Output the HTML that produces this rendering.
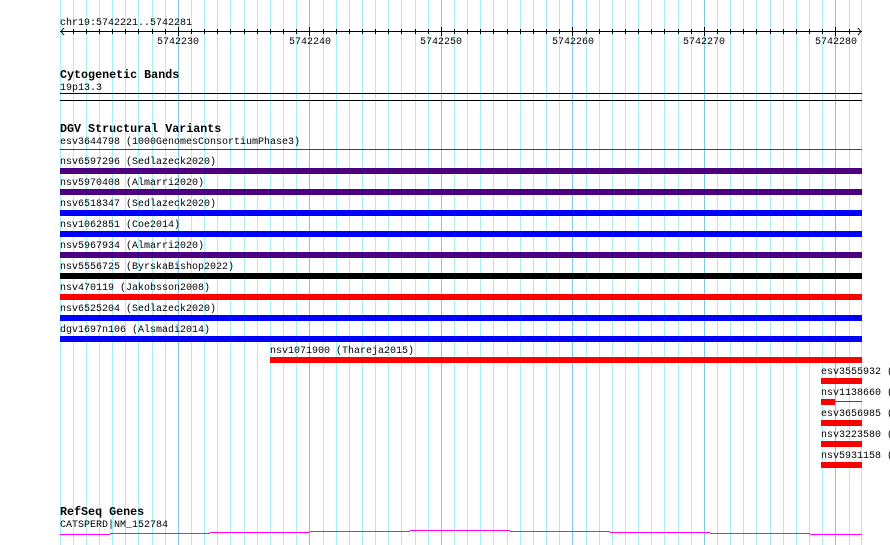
<!DOCTYPE html>
<html><head><meta charset="utf-8"><style>
html,body{margin:0;padding:0;background:#fff;width:890px;height:545px;overflow:hidden}
svg{display:block}
text{font-family:"Liberation Mono",monospace;font-size:10px;fill:#000}
.b{font-weight:bold;font-size:11.7px}
</style></head><body>
<svg width="890" height="545" viewBox="0 0 890 545" shape-rendering="crispEdges">
<g stroke="#aaeef5" stroke-width="1">
<line x1="60.5" y1="0" x2="60.5" y2="545"/><line x1="73.5" y1="0" x2="73.5" y2="545"/><line x1="86.5" y1="0" x2="86.5" y2="545"/><line x1="99.5" y1="0" x2="99.5" y2="545"/><line x1="112.5" y1="0" x2="112.5" y2="545"/><line x1="125.5" y1="0" x2="125.5" y2="545"/><line x1="138.5" y1="0" x2="138.5" y2="545"/><line x1="152.5" y1="0" x2="152.5" y2="545"/><line x1="165.5" y1="0" x2="165.5" y2="545"/>
<line x1="191.5" y1="0" x2="191.5" y2="545"/><line x1="204.5" y1="0" x2="204.5" y2="545"/><line x1="217.5" y1="0" x2="217.5" y2="545"/><line x1="230.5" y1="0" x2="230.5" y2="545"/><line x1="244.5" y1="0" x2="244.5" y2="545"/><line x1="257.5" y1="0" x2="257.5" y2="545"/><line x1="270.5" y1="0" x2="270.5" y2="545"/><line x1="283.5" y1="0" x2="283.5" y2="545"/><line x1="296.5" y1="0" x2="296.5" y2="545"/>
<line x1="323.5" y1="0" x2="323.5" y2="545"/><line x1="336.5" y1="0" x2="336.5" y2="545"/><line x1="349.5" y1="0" x2="349.5" y2="545"/><line x1="362.5" y1="0" x2="362.5" y2="545"/><line x1="375.5" y1="0" x2="375.5" y2="545"/><line x1="388.5" y1="0" x2="388.5" y2="545"/><line x1="401.5" y1="0" x2="401.5" y2="545"/><line x1="415.5" y1="0" x2="415.5" y2="545"/><line x1="428.5" y1="0" x2="428.5" y2="545"/>
<line x1="454.5" y1="0" x2="454.5" y2="545"/><line x1="467.5" y1="0" x2="467.5" y2="545"/><line x1="480.5" y1="0" x2="480.5" y2="545"/><line x1="493.5" y1="0" x2="493.5" y2="545"/><line x1="507.5" y1="0" x2="507.5" y2="545"/><line x1="520.5" y1="0" x2="520.5" y2="545"/><line x1="533.5" y1="0" x2="533.5" y2="545"/><line x1="546.5" y1="0" x2="546.5" y2="545"/><line x1="559.5" y1="0" x2="559.5" y2="545"/>
<line x1="586.5" y1="0" x2="586.5" y2="545"/><line x1="599.5" y1="0" x2="599.5" y2="545"/><line x1="612.5" y1="0" x2="612.5" y2="545"/><line x1="625.5" y1="0" x2="625.5" y2="545"/><line x1="638.5" y1="0" x2="638.5" y2="545"/><line x1="651.5" y1="0" x2="651.5" y2="545"/><line x1="664.5" y1="0" x2="664.5" y2="545"/><line x1="678.5" y1="0" x2="678.5" y2="545"/><line x1="691.5" y1="0" x2="691.5" y2="545"/>
<line x1="717.5" y1="0" x2="717.5" y2="545"/><line x1="730.5" y1="0" x2="730.5" y2="545"/><line x1="743.5" y1="0" x2="743.5" y2="545"/><line x1="756.5" y1="0" x2="756.5" y2="545"/><line x1="770.5" y1="0" x2="770.5" y2="545"/><line x1="783.5" y1="0" x2="783.5" y2="545"/><line x1="796.5" y1="0" x2="796.5" y2="545"/><line x1="809.5" y1="0" x2="809.5" y2="545"/><line x1="822.5" y1="0" x2="822.5" y2="545"/>
<line x1="849.5" y1="0" x2="849.5" y2="545"/><line x1="861.5" y1="0" x2="861.5" y2="545"/>
</g>
<g stroke="#80c8e8" stroke-width="1">
<line x1="178.5" y1="0" x2="178.5" y2="545"/><line x1="309.5" y1="0" x2="309.5" y2="545"/><line x1="441.5" y1="0" x2="441.5" y2="545"/><line x1="572.5" y1="0" x2="572.5" y2="545"/><line x1="704.5" y1="0" x2="704.5" y2="545"/><line x1="835.5" y1="0" x2="835.5" y2="545"/>
</g>
<text x="60" y="25">chr19:5742221..5742281</text>
<g stroke="#000" stroke-width="1">
<line x1="60" y1="31.5" x2="862" y2="31.5"/>
<polyline points="64,28 61,31.5 64,35" fill="none"/>
<polyline points="858,28 861,31.5 858,35" fill="none"/>
<path d="M73.5 29v5M86.5 29v5M99.5 29v5M112.5 29v5M125.5 29v5M138.5 29v5M152.5 29v5M165.5 29v5M178.5 27v9M191.5 29v5M204.5 29v5M217.5 29v5M230.5 29v5M244.5 29v5M257.5 29v5M270.5 29v5M283.5 29v5M296.5 29v5M309.5 27v9M323.5 29v5M336.5 29v5M349.5 29v5M362.5 29v5M375.5 29v5M388.5 29v5M401.5 29v5M415.5 29v5M428.5 29v5M441.5 27v9M454.5 29v5M467.5 29v5M480.5 29v5M493.5 29v5M507.5 29v5M520.5 29v5M533.5 29v5M546.5 29v5M559.5 29v5M572.5 27v9M586.5 29v5M599.5 29v5M612.5 29v5M625.5 29v5M638.5 29v5M651.5 29v5M664.5 29v5M678.5 29v5M691.5 29v5M704.5 27v9M717.5 29v5M730.5 29v5M743.5 29v5M756.5 29v5M770.5 29v5M783.5 29v5M796.5 29v5M809.5 29v5M822.5 29v5M835.5 27v9M849.5 29v5"/>
</g>
<g text-anchor="middle">
<text x="178" y="44">5742230</text><text x="310" y="44">5742240</text><text x="441" y="44">5742250</text><text x="573" y="44">5742260</text><text x="704" y="44">5742270</text><text x="836" y="44">5742280</text>
</g>
<text class="b" x="60" y="78">Cytogenetic Bands</text>
<text x="60" y="90">19p13.3</text>
<rect x="60" y="93" width="802" height="1" fill="#000"/>
<rect x="60" y="100" width="802" height="1" fill="#000"/>
<text class="b" x="60" y="132">DGV Structural Variants</text>
<text x="60" y="144">esv3644798 (1000GenomesConsortiumPhase3)</text>
<rect x="60" y="149" width="802" height="1" fill="#e00000"/>
<text x="60" y="164">nsv6597296 (Sedlazeck2020)</text>
<rect x="60" y="168" width="802" height="6" fill="#4b0082"/>
<text x="60" y="185">nsv5970408 (Almarri2020)</text>
<rect x="60" y="189" width="802" height="6" fill="#4b0082"/>
<text x="60" y="206">nsv6518347 (Sedlazeck2020)</text>
<rect x="60" y="210" width="802" height="6" fill="#0000ff"/>
<text x="60" y="227">nsv1062851 (Coe2014)</text>
<rect x="60" y="231" width="802" height="6" fill="#0000ff"/>
<text x="60" y="248">nsv5967934 (Almarri2020)</text>
<rect x="60" y="252" width="802" height="6" fill="#4b0082"/>
<text x="60" y="269">nsv5556725 (ByrskaBishop2022)</text>
<rect x="60" y="273" width="802" height="6" fill="#000"/>
<text x="60" y="290">nsv470119 (Jakobsson2008)</text>
<rect x="60" y="294" width="802" height="6" fill="#ff0000"/>
<text x="60" y="311">nsv6525204 (Sedlazeck2020)</text>
<rect x="60" y="315" width="802" height="6" fill="#0000ff"/>
<text x="60" y="332">dgv1697n106 (Alsmadi2014)</text>
<rect x="60" y="336" width="802" height="6" fill="#0000ff"/>
<text x="270" y="353">nsv1071900 (Thareja2015)</text>
<rect x="270" y="357" width="592" height="6" fill="#ff0000"/>
<text x="821" y="374">esv3555932 (</text>
<rect x="821" y="378" width="41" height="6" fill="#ff0000"/>
<text x="821" y="395">nsv1138660 (</text>
<rect x="821" y="399" width="14" height="6" fill="#ff0000"/>
<rect x="835" y="401" width="27" height="1" fill="#ff0000"/>
<text x="821" y="416">esv3656985 (</text>
<rect x="821" y="420" width="41" height="6" fill="#ff0000"/>
<text x="821" y="437">nsv3223580 (</text>
<rect x="821" y="441" width="41" height="6" fill="#ff0000"/>
<text x="821" y="458">nsv5931158 (</text>
<rect x="821" y="462" width="41" height="6" fill="#ff0000"/>
<text class="b" x="60" y="515">RefSeq Genes</text>
<text x="60" y="527">CATSPERD|NM_152784</text>
<g fill="#ff00ff">
<rect x="60" y="534" width="50" height="1"/>
<rect x="110" y="533" width="100" height="1"/>
<rect x="210" y="532" width="100" height="1"/>
<rect x="310" y="531" width="100" height="1"/>
<rect x="410" y="530" width="100" height="1"/>
<rect x="510" y="531" width="100" height="1"/>
<rect x="610" y="532" width="100" height="1"/>
<rect x="710" y="533" width="100" height="1"/>
<rect x="810" y="534" width="52" height="1"/>
</g>
</svg>
</body></html>
